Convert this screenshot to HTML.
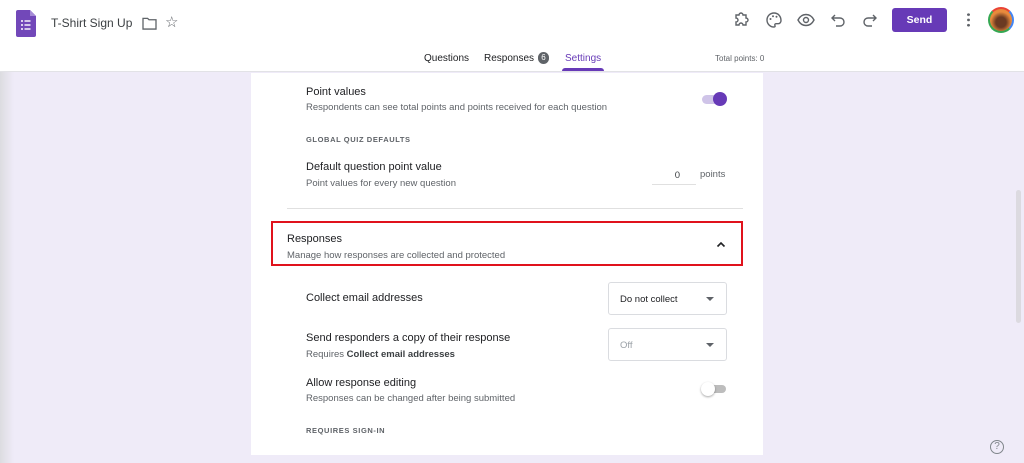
<!DOCTYPE html>
<html><head><style>
*{margin:0;padding:0;box-sizing:border-box}
body{width:1024px;height:463px;overflow:hidden;position:relative;font-family:"Liberation Sans",sans-serif;background:#efebf8;color:#202124}
.hdr{position:absolute;left:0;top:0;width:1024px;height:72px;background:#fff;border-bottom:1px solid #e2e2e6}
.abs{position:absolute}
.t{font-size:11px;color:#202124}
.s{font-size:9.5px;color:#5f6368}
.cap{font-size:7.5px;letter-spacing:.6px;color:#5f6368;font-weight:bold}
.dd{position:absolute;width:119px;height:33px;border:1px solid #dadce0;border-radius:3px;font-size:9.5px;padding:11px 0 0 11px}
.dd:after{content:"";position:absolute;right:12px;top:14px;border:4px solid transparent;border-top:4px solid #5f6368}
</style></head><body>
<div class="abs" style="left:0;top:72px;width:14px;height:391px;background:linear-gradient(90deg,#dcdce0,#efebf8)"></div>
<div class="hdr">
 <svg class="abs" style="left:16px;top:10px" width="20" height="27" viewBox="0 0 20 27"><path d="M2 0h12l6 6v19a2 2 0 0 1-2 2H2a2 2 0 0 1-2-2V2a2 2 0 0 1 2-2z" fill="#7248b9"/><path d="M14 0l6 6h-6z" fill="#a58bd6"/><g fill="#fff"><circle cx="6" cy="11" r="1"/><circle cx="6" cy="15" r="1"/><circle cx="6" cy="19" r="1"/><rect x="8.5" y="10.3" width="6" height="1.4"/><rect x="8.5" y="14.3" width="6" height="1.4"/><rect x="8.5" y="18.3" width="6" height="1.4"/></g></svg>
 <div class="abs" style="left:51px;top:16px;font-size:12px;color:#3c4043">T-Shirt Sign Up</div>
 <svg class="abs" style="left:142px;top:17px" width="15" height="13" viewBox="0 0 16 14"><path d="M1 1.5h5l1.5 1.5H15v10H1z" fill="none" stroke="#5f6368" stroke-width="1.4"/></svg>
 <div class="abs" style="left:165px;top:13px;font-size:15px;color:#5f6368">☆</div>
 <svg class="abs" style="left:733px;top:12px" width="16" height="16" viewBox="0 0 16 16"><path d="M3 3h3a2 2 0 0 1 4 0h3v3a2 2 0 0 1 0 4v3h-3a2 2 0 0 0-4 0H3v-3a2 2 0 0 0 0-4z" fill="none" stroke="#5f6368" stroke-width="1.4"/></svg>
 <svg class="abs" style="left:765px;top:11px" width="18" height="18" viewBox="0 0 18 18"><path d="M9 2a7 7 0 0 0 0 14c1 0 1.3-.7 1-1.3-.6-1 0-2 1-2h2a3 3 0 0 0 3-3C16 5 13 2 9 2z" fill="none" stroke="#5f6368" stroke-width="1.4"/><circle cx="5.5" cy="8" r="1" fill="#5f6368"/><circle cx="8" cy="5.3" r="1" fill="#5f6368"/><circle cx="11.5" cy="5.8" r="1" fill="#5f6368"/></svg>
 <svg class="abs" style="left:797px;top:13px" width="18" height="14" viewBox="0 0 18 14"><path d="M1 7c2-4 5-5.5 8-5.5S15 3 17 7c-2 4-5 5.5-8 5.5S3 11 1 7z" fill="none" stroke="#5f6368" stroke-width="1.4"/><circle cx="9" cy="7" r="2.5" fill="none" stroke="#5f6368" stroke-width="1.4"/></svg>
 <svg class="abs" style="left:831px;top:13px" width="14" height="14" viewBox="0 0 14 14"><path d="M4 2L1 5l3 3M1 5h8a4 4 0 0 1 0 8H5" fill="none" stroke="#5f6368" stroke-width="1.4"/></svg>
 <svg class="abs" style="left:863px;top:13px" width="14" height="14" viewBox="0 0 14 14"><path d="M10 2l3 3-3 3M13 5H5a4 4 0 0 0 0 8h4" fill="none" stroke="#5f6368" stroke-width="1.4"/></svg>
 <div class="abs" style="left:892px;top:8px;width:55px;height:24px;background:#673ab7;border-radius:3px;color:#fff;font-size:10.5px;font-weight:bold;text-align:center;line-height:24px">Send</div>
 <div class="abs" style="left:967px;top:12px;width:3px;height:16px;background:radial-gradient(circle,#5f6368 1.3px,transparent 1.5px) 0 0/3px 5.3px"></div>
 <div class="abs" style="left:988px;top:7px;width:26px;height:26px;border-radius:50%;border:2px solid #34a853;border-top-color:#ea4335;border-right-color:#4285f4;background:radial-gradient(circle at 50% 60%,#6b3a22 30%,#e88a3c 60%)"></div>
 <div class="abs" style="left:424px;top:53px;font-size:10px;color:#202124">Questions</div>
 <div class="abs" style="left:484px;top:53px;font-size:10px;color:#202124">Responses</div>
 <div class="abs" style="left:538px;top:52px;width:11px;height:12px;border-radius:6px;background:#5f6368;color:#fff;font-size:8px;text-align:center;line-height:12px">6</div>
 <div class="abs" style="left:565px;top:53px;font-size:10px;color:#673ab7">Settings</div>
 <div class="abs" style="left:562px;top:68px;width:42px;height:3px;background:#673ab7;border-radius:3px 3px 0 0"></div>
 <div class="abs" style="left:715px;top:54px;font-size:8px;color:#5f6368">Total points: 0</div>
</div>
<div class="abs" style="left:251px;top:73px;width:512px;height:382px;background:#fff"></div>
<div class="abs t" style="left:306px;top:86px">Point values</div>
<div class="abs s" style="left:306px;top:102px">Respondents can see total points and points received for each question</div>
<div class="abs" style="left:702px;top:95px;width:24px;height:9px;border-radius:5px;background:#cfc4e8"></div>
<div class="abs" style="left:713px;top:92px;width:14px;height:14px;border-radius:50%;background:#673ab7"></div>
<div class="abs cap" style="left:306px;top:135px">GLOBAL QUIZ DEFAULTS</div>
<div class="abs t" style="left:306px;top:161px">Default question point value</div>
<div class="abs s" style="left:306px;top:178px">Point values for every new question</div>
<div class="abs" style="left:652px;top:170px;width:44px;font-size:9.5px;text-align:right;padding-right:16px;color:#3c4043;border-bottom:1px solid #e0e0e0;height:15px">0</div>
<div class="abs s" style="left:700px;top:169px">points</div>
<div class="abs" style="left:287px;top:208px;width:456px;height:1px;background:#e0e0e0"></div>
<div class="abs" style="left:271px;top:221px;width:472px;height:45px;border:2px solid #e0121c"></div>
<div class="abs t" style="left:287px;top:233px">Responses</div>
<div class="abs s" style="left:287px;top:250px">Manage how responses are collected and protected</div>
<svg class="abs" style="left:716px;top:241px" width="10" height="7" viewBox="0 0 10 7"><path d="M1.5 5.5L5 2l3.5 3.5" fill="none" stroke="#202124" stroke-width="1.6"/></svg>
<div class="abs t" style="left:306px;top:292px">Collect email addresses</div>
<div class="dd" style="left:608px;top:282px;color:#202124">Do not collect</div>
<div class="abs t" style="left:306px;top:332px">Send responders a copy of their response</div>
<div class="abs s" style="left:306px;top:349px">Requires <b style="color:#3c4043">Collect email addresses</b></div>
<div class="dd" style="left:608px;top:328px;color:#9aa0a6">Off</div>
<div class="abs t" style="left:306px;top:377px">Allow response editing</div>
<div class="abs s" style="left:306px;top:393px">Responses can be changed after being submitted</div>
<div class="abs" style="left:703px;top:385px;width:23px;height:8px;border-radius:4px;background:#bdbdbd"></div>
<div class="abs" style="left:701px;top:382px;width:14px;height:14px;border-radius:50%;background:#fff;box-shadow:0 1px 2px rgba(0,0,0,.35)"></div>
<div class="abs cap" style="left:306px;top:426px">REQUIRES SIGN-IN</div>
<div class="abs" style="left:1016px;top:190px;width:5px;height:133px;background:#dcdae0;border-radius:3px"></div>
<div class="abs" style="left:990px;top:440px;width:14px;height:14px;border-radius:50%;border:1.4px solid #80868b;font-size:10px;color:#80868b;text-align:center;line-height:12px">?</div>
</body></html>
